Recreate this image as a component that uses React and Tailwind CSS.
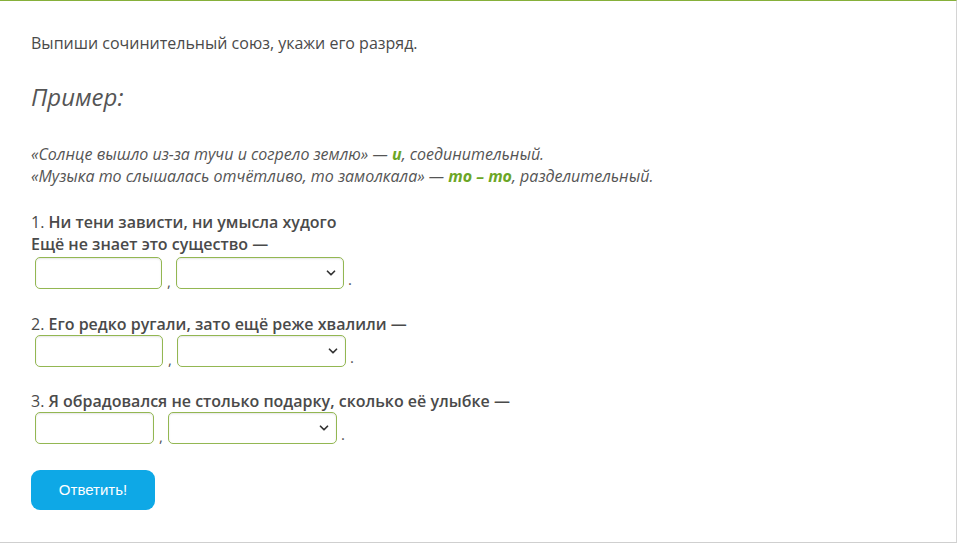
import { ChevronDown } from "lucide-react";

const font = { fontFamily: '"Open Sans", sans-serif' };

function Blank({ inputW, selectW, className = "" }) {
  return (
    <div className={`flex items-end pl-1 text-[15px] text-[#555] ${className}`}>
      <input
        type="text"
        className="h-8 rounded-[5px] border border-[#93b752] bg-white shadow-[inset_0_1px_2px_rgba(0,0,0,0.1)] outline-none"
        style={{ width: inputW }}
      />
      <span className="mx-[5px] leading-4">,</span>
      <div
        className="relative flex h-8 items-center justify-end rounded-[5px] border border-[#93b752] bg-white pr-[5px] shadow-[inset_0_1px_2px_rgba(0,0,0,0.1)]"
        style={{ width: selectW }}
      >
        <ChevronDown size={14} strokeWidth={3} className="text-[#333]" />
      </div>
      <span className="ml-[4px] leading-5">.</span>
    </div>
  );
}

export default function App() {
  return (
    <div
      className="h-[543px] w-[957px] border-t border-r border-b border-t-[#86b03a] border-r-[#d4d4d4] border-b-[#cfcfcf] bg-white text-[#4a4a4a]"
      style={font}
    >
      <div className="pl-[31px] pt-[31px]">
        <p className="text-[16px] leading-[22px]">
          Выпиши сочинительный союз, укажи его разряд.
        </p>
        <h2 className="mt-[27px] text-[24px] italic leading-[32px] text-[#555]">
          Пример:
        </h2>
        <div className="mt-[30px] text-[16px] italic leading-[22px] text-[#555]">
          <p>
            «Солнце вышло из-за тучи и согрело землю» —{" "}
            <b className="text-[#6ca626]">и</b>, соединительный.
          </p>
          <p>
            «Музыка то слышалась отчётливо, то замолкала» —{" "}
            <b className="text-[#6ca626]">то – то</b>, разделительный.
          </p>
        </div>

        <div className="mt-[24px] text-[16px] font-semibold leading-[22px]">
          <p>
            <span className="font-normal">1.</span> Ни тени зависти, ни умысла худого
          </p>
          <p>Ещё не знает это существо —</p>
        </div>
        <Blank inputW={127} selectW={168} className="mt-[2px]" />

        <p className="mt-[24px] text-[16px] font-semibold leading-[22px]">
          <span className="font-normal">2.</span> Его редко ругали, зато ещё реже хвалили —
        </p>
        <Blank inputW={128} selectW={169} />

        <p className="mt-[23px] text-[16px] font-semibold leading-[22px]">
          <span className="font-normal">3.</span> Я обрадовался не столько подарку, сколько её улыбке —
        </p>
        <Blank inputW={119} selectW={169} />

        <button
          type="button"
          className="mt-[26px] h-10 w-[124px] rounded-[9px] bg-[#0ea8e6] text-[15px] text-white"
          style={{ fontFamily: '"Liberation Sans", Arial, sans-serif' }}
        >
          Ответить!
        </button>
      </div>
    </div>
  );
}
